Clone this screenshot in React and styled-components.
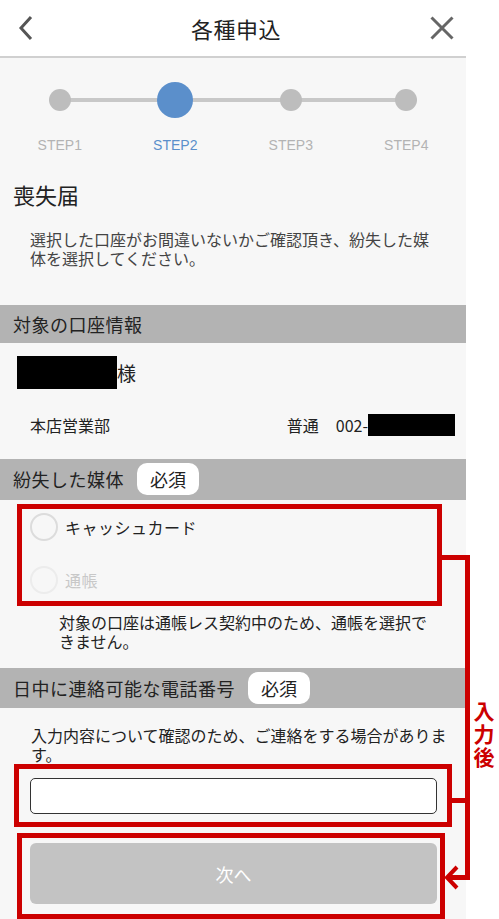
import React from 'react'
import styled, { createGlobalStyle } from 'styled-components'

const GlobalStyle = createGlobalStyle`
  html, body {
    margin: 0;
    padding: 0;
    background: #ffffff;
    overflow: hidden;
  }
  body {
    font-family: 'Noto Sans CJK JP', 'Noto Sans', sans-serif;
    color: #333;
  }
`

const RED = '#cc0000'

const Page = styled.div`
  position: relative;
  width: 499px;
  height: 919px;
  display: flex;
  overflow: hidden;
`

const Phone = styled.div`
  width: 466px;
  background: #f7f7f7;
  display: flex;
  flex-direction: column;
`

const Header = styled.header`
  height: 58px;
  background: #fff;
  border-bottom: 2px solid #d0d0d0;
  display: flex;
  align-items: center;
  justify-content: space-between;
  padding: 0 12px 0 18px;
`

const HeaderTitle = styled.h1`
  margin: 0;
  font-size: 22px;
  font-weight: 400;
  color: #222;
  letter-spacing: 0.5px;
`

const IconButton = styled.span`
  display: flex;
  width: 26px;
  height: 26px;
  align-items: center;
  justify-content: ${(p) => (p.$end ? 'flex-end' : 'flex-start')};
`

const Stepper = styled.ol`
  list-style: none;
  margin: 0;
  padding: 24px 2px 0;
  display: grid;
  grid-template-columns: repeat(4, 1fr);
`

const Step = styled.li`
  position: relative;
  display: flex;
  flex-direction: column;
  align-items: center;

  &:not(:first-child)::before {
    content: '';
    position: absolute;
    top: 16px;
    left: -50%;
    width: 100%;
    height: 4px;
    background: #c8c8c8;
  }
`

const DotSlot = styled.div`
  position: relative;
  z-index: 1;
  height: 36px;
  display: flex;
  align-items: center;
`

const Dot = styled.span`
  display: block;
  width: ${(p) => (p.$active ? 36 : 22)}px;
  height: ${(p) => (p.$active ? 36 : 22)}px;
  border-radius: 50%;
  background: ${(p) => (p.$active ? '#5b8fcb' : '#bdbdbd')};
`

const StepLabel = styled.span`
  margin-top: 19px;
  font-family: 'Liberation Sans', Arial, sans-serif;
  font-size: 14px;
  line-height: 16px;
  color: ${(p) => (p.$active ? '#5b8fcb' : '#b3b3b3')};
`

const PageTitle = styled.h2`
  margin: 26px 0 0;
  padding-left: 13px;
  font-size: 22px;
  line-height: 30px;
  font-weight: 400;
  color: #222;
`

const Note = styled.p`
  margin: ${(p) => p.$top}px 0 0;
  padding: 0 ${(p) => p.$right}px 0 ${(p) => p.$left}px;
  font-size: 16px;
  line-height: 19px;
  color: ${(p) => p.$color || '#444'};
`

const SectionBar = styled.div`
  margin-top: ${(p) => p.$top}px;
  height: ${(p) => p.$height}px;
  background: #b3b3b3;
  display: flex;
  align-items: center;
  gap: 13px;
  padding-left: 13px;
  font-size: 18px;
  letter-spacing: 0.5px;
  color: #222;
`

const RequiredPill = styled.span`
  width: 62px;
  height: 32px;
  border-radius: 10px;
  background: #fff;
  display: flex;
  align-items: center;
  justify-content: center;
  font-size: 18px;
  letter-spacing: 0;
  color: #222;
`

const NameRow = styled.div`
  margin-top: 13px;
  padding-left: 17px;
  display: flex;
  align-items: center;
  font-size: 19px;
  color: #222;
`

const Masked = styled.span`
  display: block;
  width: ${(p) => p.$w}px;
  height: ${(p) => p.$h}px;
  background: #000;
`

const AccountRow = styled.div`
  margin-top: 25px;
  height: 22px;
  padding: 0 11px 0 30px;
  display: flex;
  align-items: center;
  justify-content: space-between;
  font-size: 16px;
  color: #222;
`

const AccountNumber = styled.span`
  display: flex;
  align-items: center;
`

const AccountType = styled.span`
  margin-right: 17px;
`

const Marked = styled.div`
  margin: ${(p) => p.$top}px 0 0 ${(p) => p.$left}px;
  width: ${(p) => p.$width}px;
  box-sizing: border-box;
  border: 5px solid ${RED};
  padding: ${(p) => p.$pad};
`

const RadioRow = styled.label`
  display: flex;
  align-items: center;
  gap: 7px;
  height: 30px;
  font-size: 16px;
  letter-spacing: 0.5px;
  color: ${(p) => (p.$disabled ? '#c8c8c8' : '#222')};

  & + & {
    margin-top: 23px;
  }
`

const RadioCircle = styled.span`
  width: 28px;
  height: 28px;
  box-sizing: border-box;
  border-radius: 50%;
  border: 2px solid ${(p) => (p.$disabled ? '#ececec' : '#dcdcdc')};
  background: #f7f7f7;
`

const PhoneInput = styled.input`
  display: block;
  width: 100%;
  height: 36px;
  box-sizing: border-box;
  border: 1.5px solid #333;
  border-radius: 5px;
  background: #fff;
  outline: none;
`

const NextButton = styled.button`
  display: block;
  width: 100%;
  height: 61px;
  border: none;
  border-radius: 6px;
  background: #c3c3c3;
  color: #fff;
  font-family: inherit;
  font-size: 18px;
`

const Callout = styled.svg`
  position: absolute;
  left: 0;
  top: 0;
  pointer-events: none;
`

const CalloutText = styled.span`
  position: absolute;
  left: 473px;
  top: 701px;
  writing-mode: vertical-rl;
  font-size: 21px;
  line-height: 22px;
  letter-spacing: 2px;
  font-weight: 700;
  color: ${RED};
`

const steps = ['STEP1', 'STEP2', 'STEP3', 'STEP4']

export default function App() {
  return (
    <>
      <GlobalStyle />
      <Page>
        <Phone>
          <Header>
            <IconButton>
              <svg width="16" height="26" viewBox="0 0 16 26">
                <polyline points="13,2 3,13 13,24" fill="none" stroke="#555" strokeWidth="3" />
              </svg>
            </IconButton>
            <HeaderTitle>各種申込</HeaderTitle>
            <IconButton $end>
              <svg width="24" height="24" viewBox="0 0 24 24">
                <path d="M1.5 1.5 L22.5 22.5 M22.5 1.5 L1.5 22.5" stroke="#666" strokeWidth="3" />
              </svg>
            </IconButton>
          </Header>

          <Stepper>
            {steps.map((s, i) => (
              <Step key={s}>
                <DotSlot>
                  <Dot $active={i === 1} />
                </DotSlot>
                <StepLabel $active={i === 1}>{s}</StepLabel>
              </Step>
            ))}
          </Stepper>

          <PageTitle>喪失届</PageTitle>
          <Note $top={21} $left={30} $right={30}>
            選択した口座がお間違いないかご確認頂き、紛失した媒体を選択してください。
          </Note>

          <SectionBar $top={37} $height={40}>対象の口座情報</SectionBar>
          <NameRow>
            <Masked $w={100} $h={33} />
            <span>様</span>
          </NameRow>
          <AccountRow>
            <span>本店営業部</span>
            <AccountNumber>
              <AccountType>普通</AccountType>
              <span>002-</span>
              <Masked $w={87} $h={22} />
            </AccountNumber>
          </AccountRow>

          <SectionBar $top={23} $height={42}>
            紛失した媒体
            <RequiredPill>必須</RequiredPill>
          </SectionBar>
          <Marked $top={4} $left={17} $width={425} $pad="3px 8px 6px">
            <RadioRow>
              <RadioCircle />
              キャッシュカード
            </RadioRow>
            <RadioRow $disabled>
              <RadioCircle $disabled />
              通帳
            </RadioRow>
          </Marked>
          <Note $top={7} $left={59} $right={30} $color="#222">
            対象の口座は通帳レス契約中のため、通帳を選択できません。
          </Note>

          <SectionBar $top={17} $height={42}>
            日中に連絡可能な電話番号
            <RequiredPill>必須</RequiredPill>
          </SectionBar>
          <Note $top={18} $left={31} $right={14} $color="#222">
            入力内容について確認のため、ご連絡をする場合があります。
          </Note>
          <Marked $top={0} $left={14} $width={438} $pad="9px 10px 8px 11px">
            <PhoneInput type="tel" />
          </Marked>
          <Marked $top={6} $left={17} $width={428} $pad="5px 3px 10px 8px">
            <NextButton>次へ</NextButton>
          </Marked>
        </Phone>

        <Callout width="499" height="919" viewBox="0 0 499 919">
          <g fill="none" stroke={RED} strokeWidth="5">
            <path d="M440 557.5 H467.5 V877.5 H448" />
            <path d="M450 800.5 H467.5" />
            <path d="M457 867 L447 877.5 L457 888" strokeWidth="4" />
          </g>
        </Callout>
        <CalloutText>入力後</CalloutText>
      </Page>
    </>
  )
}
